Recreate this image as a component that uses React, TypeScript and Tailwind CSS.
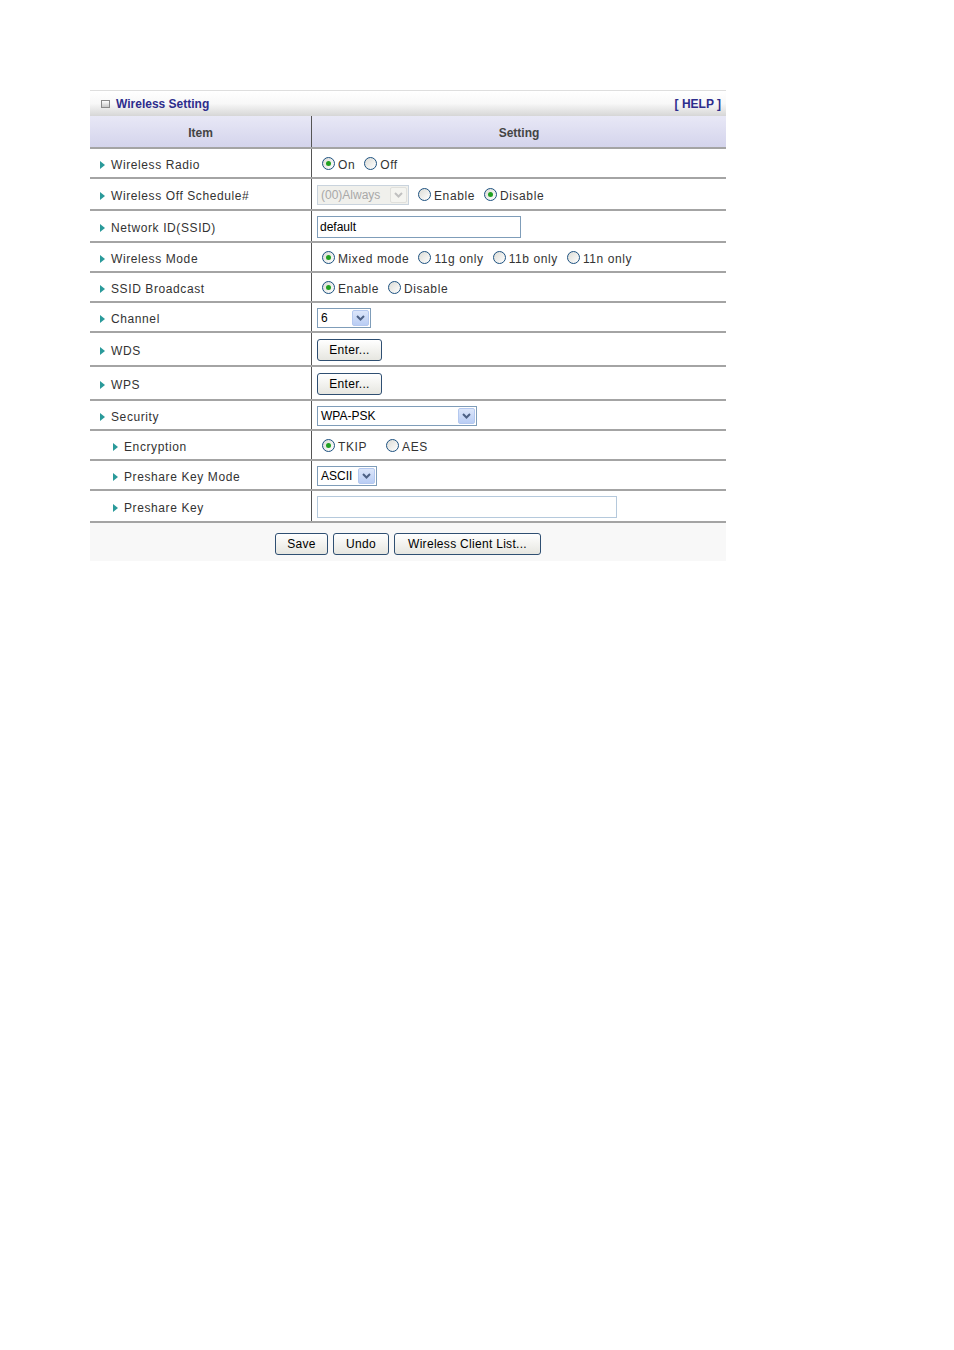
import React from "react";

const font = { fontFamily: '"Liberation Sans", Arial, sans-serif' };

function Arrow() {
    return (
        <svg width="5" height="8" viewBox="0 0 5 8" className="shrink-0">
            <path d="M0 0 L5 4 L0 8 Z" fill="#2a9a9a" />
        </svg>
    );
}

function Radio({ checked, label }: { checked?: boolean; label: string }) {
    return (
        <span className="inline-flex items-center gap-[3px]">
            <span className="w-[13px] h-[13px] rounded-full border border-[#1c5180] bg-gradient-to-br from-[#dcdcd6] to-white flex items-center justify-center">
                {checked && (
                    <span className="w-[5px] h-[5px] rounded-full bg-[#21a121]" />
                )}
            </span>
            <span className="pt-[2px]">{label}</span>
        </span>
    );
}

function Chevron({ disabled }: { disabled?: boolean }) {
    return (
        <span
            className={`w-[17px] h-[16px] flex items-center justify-center rounded-[2px] ${
                disabled
                    ? "bg-[#f4f4f0] border border-[#e0e0dc]"
                    : "bg-gradient-to-b from-[#dce6fa] to-[#b9cdf4] border border-[#b4c8ef]"
            }`}
        >
            <svg width="9" height="6" viewBox="0 0 9 6">
                <path
                    d="M1 1 L4.5 4.5 L8 1"
                    fill="none"
                    stroke={disabled ? "#c0c0c0" : "#4d6185"}
                    strokeWidth="2"
                />
            </svg>
        </span>
    );
}

function Select({
    value,
    width,
    disabled,
}: {
    value: string;
    width: string;
    disabled?: boolean;
}) {
    return (
        <div
            className={`${width} h-[20px] flex items-center justify-between pl-[3px] pr-[1px] border tracking-normal ${
                disabled
                    ? "border-[#c9d3dd] bg-[#f0f0ec] text-[#a8a8a8]"
                    : "border-[#7f9db9] bg-white text-black"
            }`}
        >
            <span>{value}</span>
            <Chevron disabled={disabled} />
        </div>
    );
}

function Button({ children, width }: { children: React.ReactNode; width: string }) {
    return (
        <button
            className={`${width} h-[22px] rounded-[3px] border border-[#2f4f72] bg-gradient-to-b from-white to-[#e6e6e0] text-[12px] text-black leading-none tracking-[0.3px]`}
        >
            {children}
        </button>
    );
}

type Row = {
    label: string;
    sub?: boolean;
    h: string;
    content: React.ReactNode;
};

const rows: Row[] = [
    {
        label: "Wireless Radio",
        h: "h-[30px]",
        content: (
            <div className="flex items-center gap-[9px] pl-[5px]">
                <Radio checked label="On" />
                <Radio label="Off" />
            </div>
        ),
    },
    {
        label: "Wireless Off Schedule#",
        h: "h-[32px]",
        content: (
            <div className="flex items-center gap-[9px]">
                <Select value="(00)Always" width="w-[92px]" disabled />
                <Radio label="Enable" />
                <Radio checked label="Disable" />
            </div>
        ),
    },
    {
        label: "Network ID(SSID)",
        h: "h-[32px]",
        content: (
            <div className="w-[204px] h-[22px] border border-[#7f9db9] flex items-center pl-[2px] text-black tracking-normal">
                default
            </div>
        ),
    },
    {
        label: "Wireless Mode",
        h: "h-[30px]",
        content: (
            <div className="flex items-center gap-[9px] pl-[5px]">
                <Radio checked label="Mixed mode" />
                <Radio label="11g only" />
                <Radio label="11b only" />
                <Radio label="11n only" />
            </div>
        ),
    },
    {
        label: "SSID Broadcast",
        h: "h-[30px]",
        content: (
            <div className="flex items-center gap-[9px] pl-[5px]">
                <Radio checked label="Enable" />
                <Radio label="Disable" />
            </div>
        ),
    },
    {
        label: "Channel",
        h: "h-[30px]",
        content: <Select value="6" width="w-[54px]" />,
    },
    {
        label: "WDS",
        h: "h-[34px]",
        content: <Button width="w-[65px]">Enter...</Button>,
    },
    {
        label: "WPS",
        h: "h-[34px]",
        content: <Button width="w-[65px]">Enter...</Button>,
    },
    {
        label: "Security",
        h: "h-[30px]",
        content: <Select value="WPA-PSK" width="w-[160px]" />,
    },
    {
        label: "Encryption",
        sub: true,
        h: "h-[30px]",
        content: (
            <div className="flex items-center gap-[19px] pl-[5px]">
                <Radio checked label="TKIP" />
                <Radio label="AES" />
            </div>
        ),
    },
    {
        label: "Preshare Key Mode",
        sub: true,
        h: "h-[30px]",
        content: <Select value="ASCII" width="w-[60px]" />,
    },
    {
        label: "Preshare Key",
        sub: true,
        h: "h-[32px]",
        content: <div className="w-[300px] h-[22px] border border-[#b5c9dc]" />,
    },
];

export default function App() {
    return (
        <div className="min-h-[1350px] bg-white pt-[90px] pl-[90px]" style={font}>
            <div className="w-[636px] text-[12px] text-[#333] tracking-[0.6px]">
                {/* Title bar */}
                <div className="h-[26px] flex items-center justify-between px-[5px] border-t border-[#dedede] bg-gradient-to-b from-white via-[#f8f8f8] to-[#d6d6d6]">
                    <div className="flex items-center gap-[6px] pl-[6px]">
                        <span className="w-[9px] h-[8px] border border-[#8a8a8a] bg-gradient-to-b from-white to-[#c8c8c8]" />
                        <span className="font-bold text-[#2d2d8c] tracking-normal">
                            Wireless Setting
                        </span>
                    </div>
                    <span className="font-bold text-[#2d2d8c] tracking-normal">[ HELP ]</span>
                </div>

                {/* Header */}
                <div className="grid grid-cols-[222px_414px] h-[33px] bg-gradient-to-b from-[#e8e8f6] to-[#d4d4ec] border-b-2 border-[#a4a4a4] font-bold text-[#444] tracking-normal">
                    <div className="flex items-center justify-center border-r border-[#555] pt-[3px]">Item</div>
                    <div className="flex items-center justify-center pt-[3px]">Setting</div>
                </div>

                {rows.map((r) => (
                    <div
                        key={r.label}
                        className={`grid grid-cols-[222px_414px] ${r.h} border-b-2 border-[#a4a4a4]`}
                    >
                        <div
                            className={`flex items-center gap-[6px] border-r border-[#555] pt-[4px] ${
                                r.sub ? "pl-[23px]" : "pl-[10px]"
                            }`}
                        >
                            <Arrow />
                            <span>{r.label}</span>
                        </div>
                        <div className="flex items-center pl-[5px] pt-[1px]">{r.content}</div>
                    </div>
                ))}

                {/* Buttons */}
                <div className="h-[38px] bg-[#f8f8f8] flex items-center justify-center gap-[5px] pt-[4px]">
                    <Button width="w-[53px]">Save</Button>
                    <Button width="w-[56px]">Undo</Button>
                    <Button width="w-[147px]">Wireless Client List...</Button>
                </div>
            </div>
        </div>
    );
}
